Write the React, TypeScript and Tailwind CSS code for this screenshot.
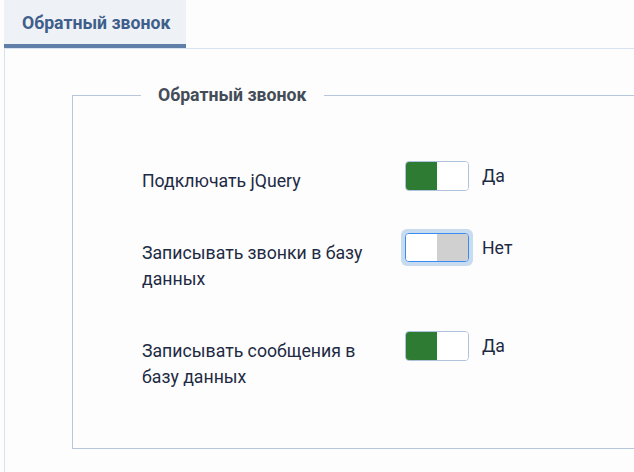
import { useState } from "react";

// one yes/no setting
interface Setting {
  id: number;
  label: string;
  on: boolean;
}

const Toggle = ({ on, focused }: { on: boolean; focused?: boolean }) => {
  return (
    <div
      className={
        focused
          ? "rounded-[6px] p-[4px] bg-[#c9dbef] -m-[4px]"
          : "rounded-[6px]"
      }
    >
      <div
        className={
          focused
            ? "flex w-[64px] h-[29px] rounded-[4px] border border-[#3b8cf0] overflow-hidden bg-white"
            : "flex w-[64px] h-[30px] rounded-[4px] border border-[#aec2dc] overflow-hidden bg-white"
        }
      >
        <div className={on ? "w-1/2 h-full bg-[#2e7b33]" : "w-1/2 h-full bg-white"} />
        <div className={on ? "w-1/2 h-full bg-white" : "w-1/2 h-full bg-[#d0d0d0]"} />
      </div>
    </div>
  );
};

const App = () => {
  const [settings] = useState<Setting[]>([
    { id: 1, label: "Подключать jQuery", on: true },
    { id: 2, label: "Записывать звонки в базу данных", on: false },
    { id: 3, label: "Записывать сообщения в базу данных", on: true },
  ]);

  return (
    <div
      className="w-[634px] h-[472px] overflow-hidden bg-[#fdfdfd] pl-[4px]"
      style={{ fontFamily: "Roboto, 'Noto Sans', sans-serif" }}
    >
      {/* tabs */}
      <div className="flex border-b border-[#d7e3f0] h-[49px]">
        <div className="w-[182px] h-[48px] bg-[#eef1f5] border-b-4 border-[#5f7ea8] pl-[18px] pt-[11px] text-[17.7px] font-bold text-[#3e5e8b] leading-6">
          Обратный звонок
        </div>
      </div>

      {/* body */}
      <div className="border-l border-[#d7e3f0] h-[423px] pl-[67px] pt-[34px]">
        <fieldset className="w-[600px] border border-[#b7c6da] pl-[69px] pt-[54px] pb-[58px]">
          <legend className="-ml-[1px] px-[17px] text-[17.7px] font-bold text-[#444c57] leading-6">
            Обратный звонок
          </legend>
          <div className="flex flex-col gap-[39px]">
            {settings.map((s) => (
              <div key={s.id} className="flex items-start">
                <div className="w-[240px] mt-[7px] text-[17.7px] leading-[26px] text-[#1d2a44]">
                  {s.label}
                </div>
                <div className="ml-[23px]">
                  <Toggle on={s.on} focused={s.id === 2} />
                </div>
                <div className="ml-[13px] mt-[2px] text-[17.7px] leading-[26px] text-[#1d2a44]">
                  {s.on ? "Да" : "Нет"}
                </div>
              </div>
            ))}
          </div>
        </fieldset>
      </div>
    </div>
  );
};

export default App;
